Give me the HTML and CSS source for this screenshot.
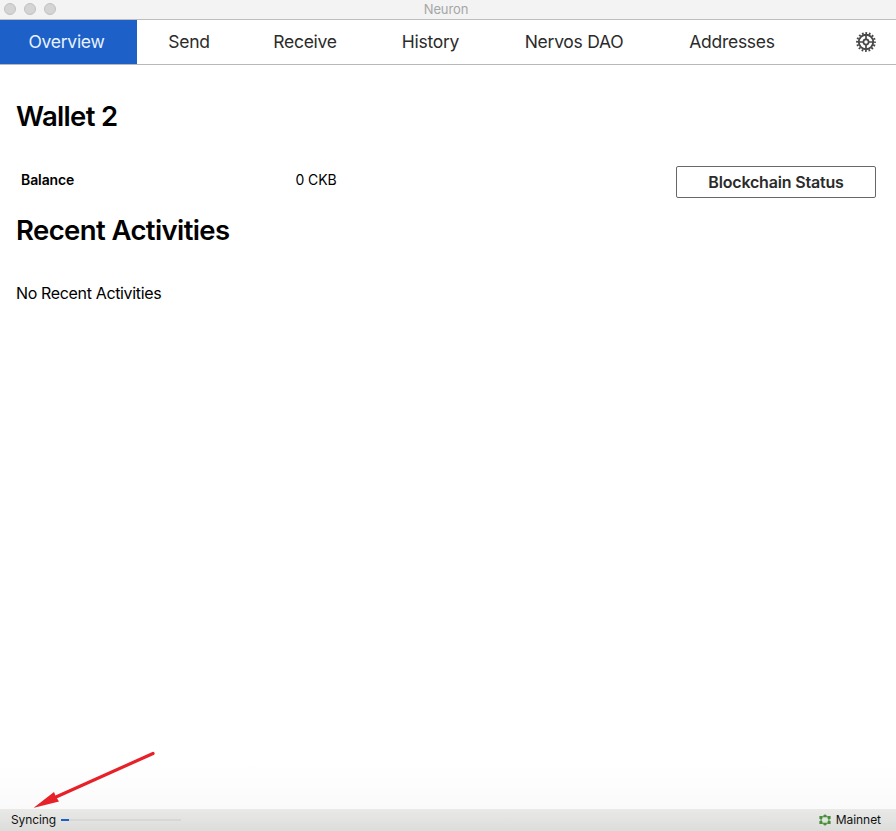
FILE: index.html
```
<!DOCTYPE html>
<html lang="en">
<head>
<meta charset="utf-8">
<title>Neuron</title>
<link rel="stylesheet" href="styles.css">
</head>
<body>
<div class="window">
  <header class="titlebar">
    <div class="lights"><i></i><i></i><i></i></div>
    <span class="title">Neuron</span>
  </header>
  <nav class="tabs">
    <a class="tab active">Overview</a>
    <a class="tab">Send</a>
    <a class="tab">Receive</a>
    <a class="tab">History</a>
    <a class="tab dao">Nervos DAO</a>
    <a class="tab addresses">Addresses</a>
    <svg class="gear" viewBox="-10 -10 20 20" fill="none" stroke="#484848">
      <circle r="7.2" stroke-width="1.9"/>
      <circle r="8.9" stroke-width="2" stroke-dasharray="1.75 1.745" stroke-dashoffset=".87"/>
      <circle r="2.6" stroke-width="1.7"/>
      <path d="M0-3V-7M0 3V7M-3 0H-7M3 0H7" stroke-width="1.7"/>
    </svg>
  </nav>
  <main class="content">
    <h1 class="wallet">Wallet 2</h1>
    <div class="summary">
      <span class="label">Balance</span>
      <span class="amount">0 CKB</span>
      <button class="status">Blockchain Status</button>
    </div>
    <h1 class="recent">Recent Activities</h1>
    <p class="empty">No Recent Activities</p>
  </main>
  <footer class="footer">
    <span class="sync">Syncing</span>
    <div class="progress"><div class="bar"></div></div>
    <svg class="network" viewBox="0 0 12 12">
      <path d="M6 1.6 9.9 3.6V8.4L6 10.4 2.1 8.4V3.6Z" fill="none" stroke="#6ba762" stroke-width="1.5"/>
      <path d="M4.5 1.6 6 .2 7.5 1.6V3.2H4.5ZM4.5 10.4 6 11.8 7.5 10.4V8.8H4.5ZM.4 2.1H3.3V4.9H.4ZM8.7 2.1H11.6V4.9H8.7ZM.4 7.1H3.3V9.9H.4ZM8.7 7.1H11.6V9.9H8.7Z" fill="#459039"/>
    </svg>
    <span class="mainnet">Mainnet</span>
  </footer>
  <svg class="arrow" viewBox="0 0 126 60">
    <path d="M119 3.5 22 47" stroke="#e62129" stroke-width="3.2" stroke-linecap="round"/>
    <path d="M0 58 20.5 42 22.3 46.5 25.5 51.5Z" transform="translate(-.5 0)" fill="#e62129"/>
  </svg>
</div>
</body>
</html>
```
FILE: styles.css
```
* { box-sizing: border-box; }
body { margin: 0; background: #fff; color: #000; font-family: Inter, "Liberation Sans", sans-serif; }
.window { position: relative; display: flex; flex-direction: column; height: 831px; overflow: hidden; }
.titlebar { position: relative; height: 20px; flex: none; background: #f3f3f3; border-bottom: 1px solid #bdbdbd; display: flex; justify-content: center; }
.lights { position: absolute; left: 4px; top: 3px; display: flex; gap: 8px; }
.lights i { width: 12px; height: 12px; border-radius: 50%; background: #d4d4d4; border: 1px solid #c1c1c1; }
.title { font-size: 13px; line-height: 19px; color: #a6a6a6; margin-right: 4px; letter-spacing: -.1px; }
.tabs { height: 45px; flex: none; display: grid; grid-template-columns: 137px 104px 128px 123px 164px 152px 88px; align-items: stretch; border-bottom: 1px solid #b9b9b9; }
.tab { display: flex; align-items: center; justify-content: center; padding-bottom: 1px; font-size: 17.5px; letter-spacing: -.27px; color: #2b2b2b; white-space: nowrap; }
.active { background: #1c60c8; color: #e8f3ff; padding-right: 4px; }
.gear { width: 20px; height: 20px; align-self: center; margin-left: 48px; }
.content { flex: 1; padding: 34px 20px 0 16px; background: linear-gradient(#fff 94%, #fafafa); }
h1 { margin: 0; font-size: 27.5px; line-height: 34px; font-weight: 600; letter-spacing: -.6px; }
.wallet { letter-spacing: -.65px; }
.summary { display: grid; grid-template-columns: 274px 1fr 200px; align-items: center; height: 32px; margin-top: 33px; padding-left: 5px; font-size: 14px; }
.label { font-weight: 600; letter-spacing: -.1px; margin-bottom: 6px; }
.amount { margin-bottom: 6px; padding-left: .5px; letter-spacing: -.1px; }
.status { height: 32px; padding: 0; border: 1px solid #686868; border-radius: 2px; background: #fff; color: #2b2b2b; font: 600 16px Inter, sans-serif; letter-spacing: -.18px; }
.recent { margin-top: 15px; }
.empty { margin: 36px 0 0; font-size: 16px; line-height: 20px; letter-spacing: -.35px; }
.footer { height: 22px; flex: none; display: flex; align-items: center; padding: 0 15px 0 11px; font-size: 12px; color: #111; background: linear-gradient(#e9e9e8, #dcdcdb); }
.sync, .mainnet { padding-bottom: 2px; }
.sync { letter-spacing: -.1px; }
.progress { width: 120px; height: 2px; margin-left: 5px; background: #d7d7d7; }
.bar { width: 8px; height: 2px; background: #1c60c8; }
.network { width: 12px; height: 12px; margin: 0 5px 0 auto; }
.mainnet { letter-spacing: -.05px; }
.arrow { position: absolute; left: 34px; top: 750px; width: 126px; height: 60px; }
```
